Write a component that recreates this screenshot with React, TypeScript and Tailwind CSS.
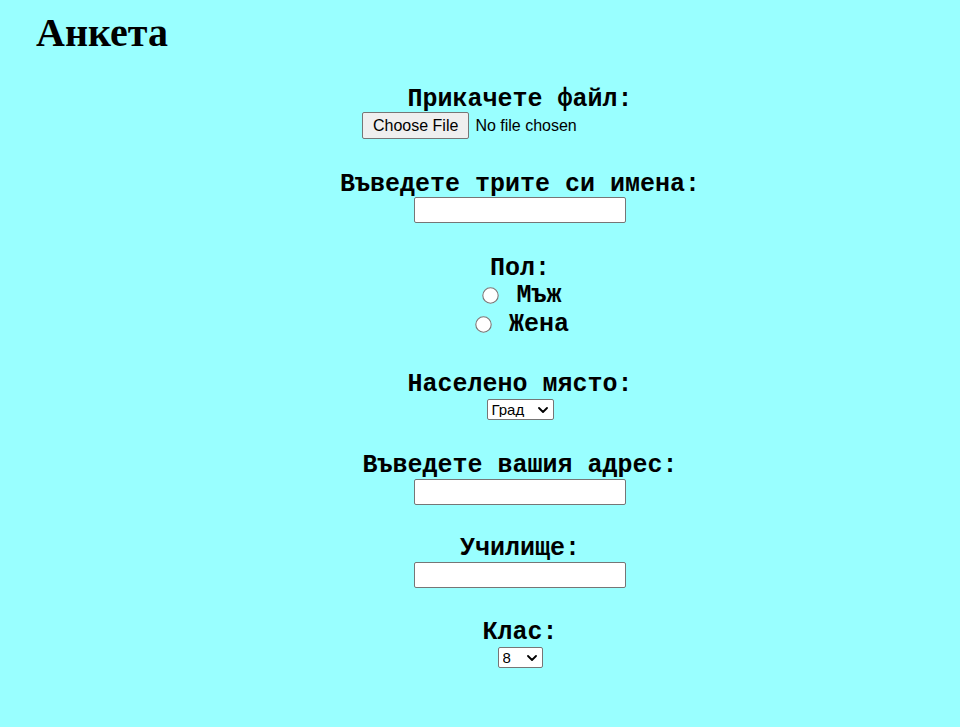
import React, { FC } from "react"

/**
 * small native-looking select ... preflight strips the chrome one, so draw it
 */
const FakeSelect: FC<{ value: string; width: string }> = ({ value, width }) => {
  return (
    <div className={`relative inline-flex h-[21px] items-center rounded-[2px] border border-[#767676] bg-white ${width}`}>
      <select
        defaultValue={value}
        className="h-full w-full appearance-none bg-transparent pl-[4px] font-['Liberation_Sans',Arial,sans-serif] text-[15px] font-normal leading-none text-black outline-none"
      >
        <option>{value}</option>
      </select>
      <svg className="pointer-events-none absolute right-[5px] top-[7px] h-[6px] w-[10px]" viewBox="0 0 10 6" fill="none" stroke="#000" strokeWidth="1.8" strokeLinecap="round" strokeLinejoin="round">
        <path d="M1 1l4 4 4-4" />
      </svg>
    </div>
  )
}

const TextBox: FC = () => (
  <input type="text" className="h-[26px] w-[212px] rounded-[2px] border border-[#767676] bg-white px-[2px] outline-none" />
)

const Label: FC<{ text: string; className?: string }> = ({ text, className }) => (
  <div className={`h-[28px] whitespace-pre leading-[31px] ${className ?? ""}`}>{text}</div>
)

const App: FC = () => {
  return (
    <div className="min-h-screen bg-[#99ffff] text-black">
      <h1 className="pl-[36px] pt-[10px] font-['Liberation_Serif','Times_New_Roman',serif] text-[40px] font-bold leading-[46px]">
        Анкета
      </h1>

      <form className="ml-[80px] flex flex-col items-center font-['Liberation_Mono','Courier_New',monospace] text-[25px] font-bold">
        <Label text="Прикачете файл:" className="mt-[28px]" />
        <input
          type="file"
          className="h-[27px] w-[316px] font-['Liberation_Sans',Arial,sans-serif] text-[16px] font-normal file:mr-[6px] file:h-[27px] file:rounded-[2px] file:border file:border-solid file:border-[#767676] file:bg-[#efefef] file:px-[10px] file:text-black"
        />

        <Label text="Въведете трите си имена:" className="mt-[30px]" />
        <TextBox />

        <Label text="Пол:" className="mt-[30px]" />
        <label className="flex h-[29px] items-center whitespace-pre leading-[31px]">
          <input type="radio" name="gender" className="ml-[5px] mr-[3px] size-[15px] scale-110" />
          {" Мъж"}
        </label>
        <label className="flex h-[29px] items-center whitespace-pre leading-[31px]">
          <input type="radio" name="gender" className="ml-[5px] mr-[3px] size-[15px] scale-110" />
          {" Жена"}
        </label>

        <Label text="Населено място:" className="mt-[30px]" />
        <div className="mt-[2px] flex">
          <FakeSelect value="Град" width="w-[67px]" />
        </div>

        <Label text="Въведете вашия адрес:" className="mt-[30px]" />
        <div className="mt-px flex">
          <TextBox />
        </div>

        <Label text="Училище:" className="mt-[28px]" />
        <div className="mt-px flex">
          <TextBox />
        </div>

        <Label text="Клас:" className="mt-[29px]" />
        <div className="mt-[2px] flex">
          <FakeSelect value="8" width="w-[45px]" />
        </div>
      </form>
    </div>
  )
}

export default App
